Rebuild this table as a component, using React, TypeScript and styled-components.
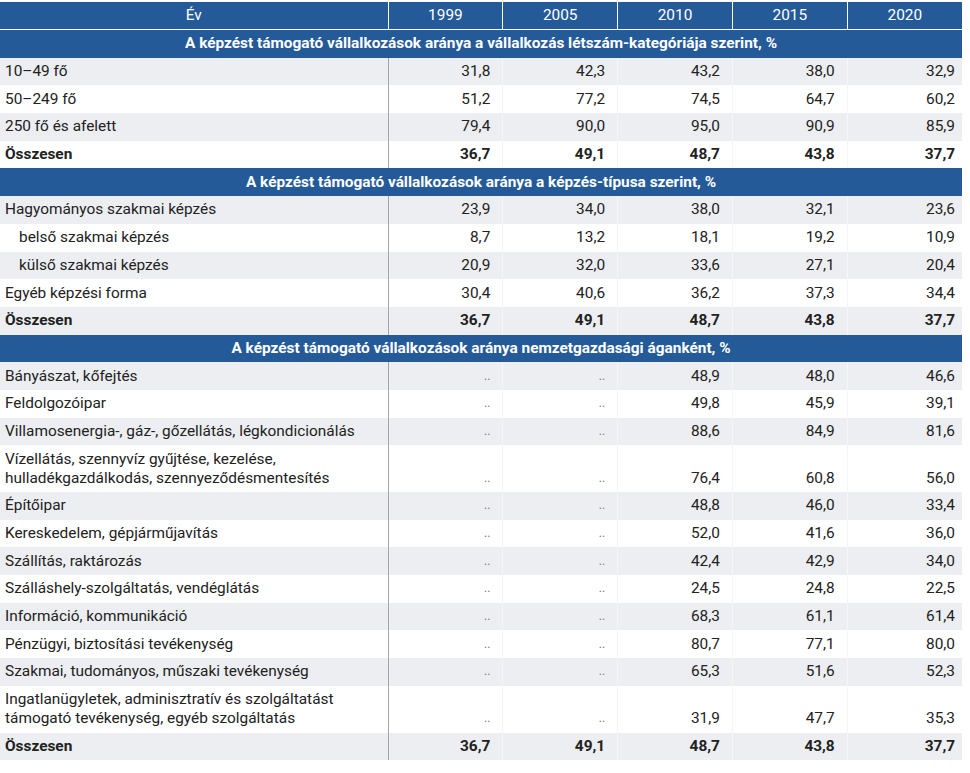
import React from "react";
import styled, { createGlobalStyle } from "styled-components";

const Global = createGlobalStyle`
  html, body { margin: 0; padding: 0; background: #ffffff; }
  body { font-family: Roboto, "Liberation Sans", Arial, sans-serif; color: #222; }
`;

const Wrap = styled.div`
  padding: 2px 0 0 0;
  width: 962px;
`;

const Table = styled.table`
  width: 962px;
  border-collapse: collapse;
  table-layout: fixed;
  font-size: 15.4px;
  line-height: 19px;
`;

const HeadCell = styled.th<{ $first?: boolean }>`
  background: #245a97;
  color: #fff;
  font-weight: 400;
  text-align: center;
  padding: 4px 6px;
  height: 19px;
  border: 1px solid #fff;
  border-top: none;
  ${(p) => (p.$first ? "border-left: none;" : "")}
  &:last-child { border-right: none; }
`;

const SectionCell = styled.td`
  background: #245a97;
  color: #fff;
  font-weight: 700;
  text-align: center;
  padding: 4.35px 6px;
`;

const Row = styled.tr<{ $shade: boolean; $bold?: boolean }>`
  background: ${(p) => (p.$shade ? "#eceef1" : "#ffffff")};
  font-weight: ${(p) => (p.$bold ? 700 : 400)};
`;

const LabelCell = styled.td<{ $indent?: boolean }>`
  padding: 4.35px 6px 4.35px ${(p) => (p.$indent ? "19px" : "5px")};
  border-right: 1px solid #a4a6a8;
  text-align: left;
  vertical-align: middle;
`;

const NumCell = styled.td<{ $last?: boolean; $na?: boolean }>`
  padding: 4.35px ${(p) => (p.$last ? "7px" : "12px")} 4.35px 6px;
  border-left: 1px solid #f5f6f7;
  text-align: right;
  vertical-align: bottom;
  color: ${(p) => (p.$na ? "#777" : "#222")};
  font-size: ${(p) => (p.$na ? "12px" : "inherit")};
`;

type DataRow = { label: string; values: string[]; indent?: boolean; bold?: boolean };
type Section = { title: string; rows: DataRow[] };

const total: DataRow = { label: "Összesen", values: ["36,7", "49,1", "48,7", "43,8", "37,7"], bold: true };

const sections: Section[] = [
  {
    title: "A képzést támogató vállalkozások aránya a vállalkozás létszám-kategóriája szerint, %",
    rows: [
      { label: "10–49 fő", values: ["31,8", "42,3", "43,2", "38,0", "32,9"] },
      { label: "50–249 fő", values: ["51,2", "77,2", "74,5", "64,7", "60,2"] },
      { label: "250 fő és afelett", values: ["79,4", "90,0", "95,0", "90,9", "85,9"] },
      total,
    ],
  },
  {
    title: "A képzést támogató vállalkozások aránya a képzés-típusa szerint, %",
    rows: [
      { label: "Hagyományos szakmai képzés", values: ["23,9", "34,0", "38,0", "32,1", "23,6"] },
      { label: "belső szakmai képzés", values: ["8,7", "13,2", "18,1", "19,2", "10,9"], indent: true },
      { label: "külső szakmai képzés", values: ["20,9", "32,0", "33,6", "27,1", "20,4"], indent: true },
      { label: "Egyéb képzési forma", values: ["30,4", "40,6", "36,2", "37,3", "34,4"] },
      total,
    ],
  },
  {
    title: "A képzést támogató vállalkozások aránya nemzetgazdasági áganként, %",
    rows: [
      { label: "Bányászat, kőfejtés", values: ["..", "..", "48,9", "48,0", "46,6"] },
      { label: "Feldolgozóipar", values: ["..", "..", "49,8", "45,9", "39,1"] },
      { label: "Villamosenergia-, gáz-, gőzellátás, légkondicionálás", values: ["..", "..", "88,6", "84,9", "81,6"] },
      {
        label: "Vízellátás, szennyvíz gyűjtése, kezelése, hulladékgazdálkodás, szennyeződésmentesítés",
        values: ["..", "..", "76,4", "60,8", "56,0"],
      },
      { label: "Építőipar", values: ["..", "..", "48,8", "46,0", "33,4"] },
      { label: "Kereskedelem, gépjárműjavítás", values: ["..", "..", "52,0", "41,6", "36,0"] },
      { label: "Szállítás, raktározás", values: ["..", "..", "42,4", "42,9", "34,0"] },
      { label: "Szálláshely-szolgáltatás, vendéglátás", values: ["..", "..", "24,5", "24,8", "22,5"] },
      { label: "Információ, kommunikáció", values: ["..", "..", "68,3", "61,1", "61,4"] },
      { label: "Pénzügyi, biztosítási tevékenység", values: ["..", "..", "80,7", "77,1", "80,0"] },
      { label: "Szakmai, tudományos, műszaki tevékenység", values: ["..", "..", "65,3", "51,6", "52,3"] },
      {
        label: "Ingatlanügyletek, adminisztratív és szolgáltatást támogató tevékenység, egyéb szolgáltatás",
        values: ["..", "..", "31,9", "47,7", "35,3"],
      },
      total,
    ],
  },
];

const years = ["1999", "2005", "2010", "2015", "2020"];

export default function App() {
  return (
    <Wrap>
      <Global />
      <Table>
        <colgroup>
          <col style={{ width: 388 }} />
          {years.map((y) => (
            <col key={y} />
          ))}
        </colgroup>
        <thead>
          <tr>
            <HeadCell $first>Év</HeadCell>
            {years.map((y) => (
              <HeadCell key={y}>{y}</HeadCell>
            ))}
          </tr>
        </thead>
        <tbody>
          {sections.map((s, si) => (
            <React.Fragment key={si}>
              <tr>
                <SectionCell colSpan={6}>{s.title}</SectionCell>
              </tr>
              {s.rows.map((r, ri) => (
                <Row key={ri} $shade={ri % 2 === 0} $bold={r.bold}>
                  <LabelCell $indent={r.indent}>{r.label}</LabelCell>
                  {r.values.map((v, vi) => (
                    <NumCell key={vi} $last={vi === 4} $na={v === ".."}>
                      {v}
                    </NumCell>
                  ))}
                </Row>
              ))}
            </React.Fragment>
          ))}
        </tbody>
      </Table>
    </Wrap>
  );
}
